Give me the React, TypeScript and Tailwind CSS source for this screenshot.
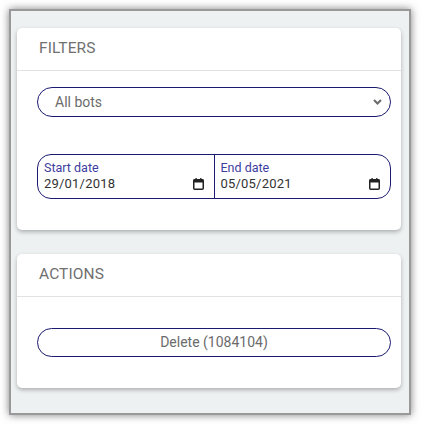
import React from 'react'

function CalendarIcon() {
  return (
    <svg width="11" height="12" viewBox="0 0 11 12" className="shrink-0">
      <rect x="0.75" y="1.75" width="9.5" height="9.5" rx="1" fill="none" stroke="#222" strokeWidth="1.5" />
      <rect x="0.5" y="1.5" width="10" height="3" fill="#222" />
      <rect x="2.5" y="0" width="1.3" height="2" fill="#222" />
      <rect x="7.2" y="0" width="1.3" height="2" fill="#222" />
    </svg>
  )
}

function Chevron() {
  return (
    <svg width="9" height="6" viewBox="0 0 9 6">
      <path d="M1 1 L4.5 4.5 L8 1" fill="none" stroke="#6b6b6b" strokeWidth="2" />
    </svg>
  )
}

function DateCell({ label, value, last }: { label: string; value: string; last?: boolean }) {
  return (
    <div className={`flex-1 pt-[5px] pl-[6px] pr-[10px] ${last ? '' : 'border-r border-[#1a1a70]'}`}>
      <div className="text-[12.5px] leading-[16px] text-[#3d3d9e]">{label}</div>
      <div className="flex items-center justify-between">
        <span className="text-[13px] leading-[16px] text-[#333] tracking-[0.2px]">{value}</span>
        <CalendarIcon />
      </div>
    </div>
  )
}

function Card({ title, children, className }: { title: string; children: React.ReactNode; className?: string }) {
  return (
    <div className={`bg-white rounded-[5px] shadow-[0_2px_4px_rgba(0,0,0,0.28)] ${className ?? ''}`}>
      <div className="h-[43px] px-[22px] flex items-center border-b border-[#e2e2e2] text-[15.5px] text-[#707070] tracking-[0.1px]">
        {title}
      </div>
      {children}
    </div>
  )
}

export default function App() {
  return (
    <div className="w-[421px] h-[425px] bg-white pt-[9px] pl-[9px]" style={{ fontFamily: 'Roboto, "Liberation Sans", sans-serif' }}>
      <div className="w-[402px] h-[406px] border-2 border-[#999] bg-[#eef1f2] shadow-[0_0_8px_rgba(0,0,0,0.5)] pt-[17px] pl-[6px] pr-[8px]">
        <Card title="FILTERS">
          <div className="pt-[16px] pb-[31px] pl-[20px] pr-[10px] flex flex-col gap-[37px]">
            <div className="h-[30px] rounded-[15px] border border-[#1a1a70] flex items-center justify-between pl-[17px] pr-[8px]">
              <span className="text-[14px] text-[#6b6b6b]">All bots</span>
              <Chevron />
            </div>
            <div className="h-[45px] rounded-[14px] border border-[#1a1a70] flex">
              <DateCell label="Start date" value="29/01/2018" />
              <DateCell label="End date" value="05/05/2021" last />
            </div>
          </div>
        </Card>
        <Card title="ACTIONS" className="mt-[24px]">
          <div className="pt-[31px] pb-[31px] pl-[20px] pr-[10px]">
            <div className="h-[29px] rounded-[15px] border border-[#1a1a70] flex items-center justify-center text-[14px] text-[#6b6b6b]">
              Delete (1084104)
            </div>
          </div>
        </Card>
      </div>
    </div>
  )
}
